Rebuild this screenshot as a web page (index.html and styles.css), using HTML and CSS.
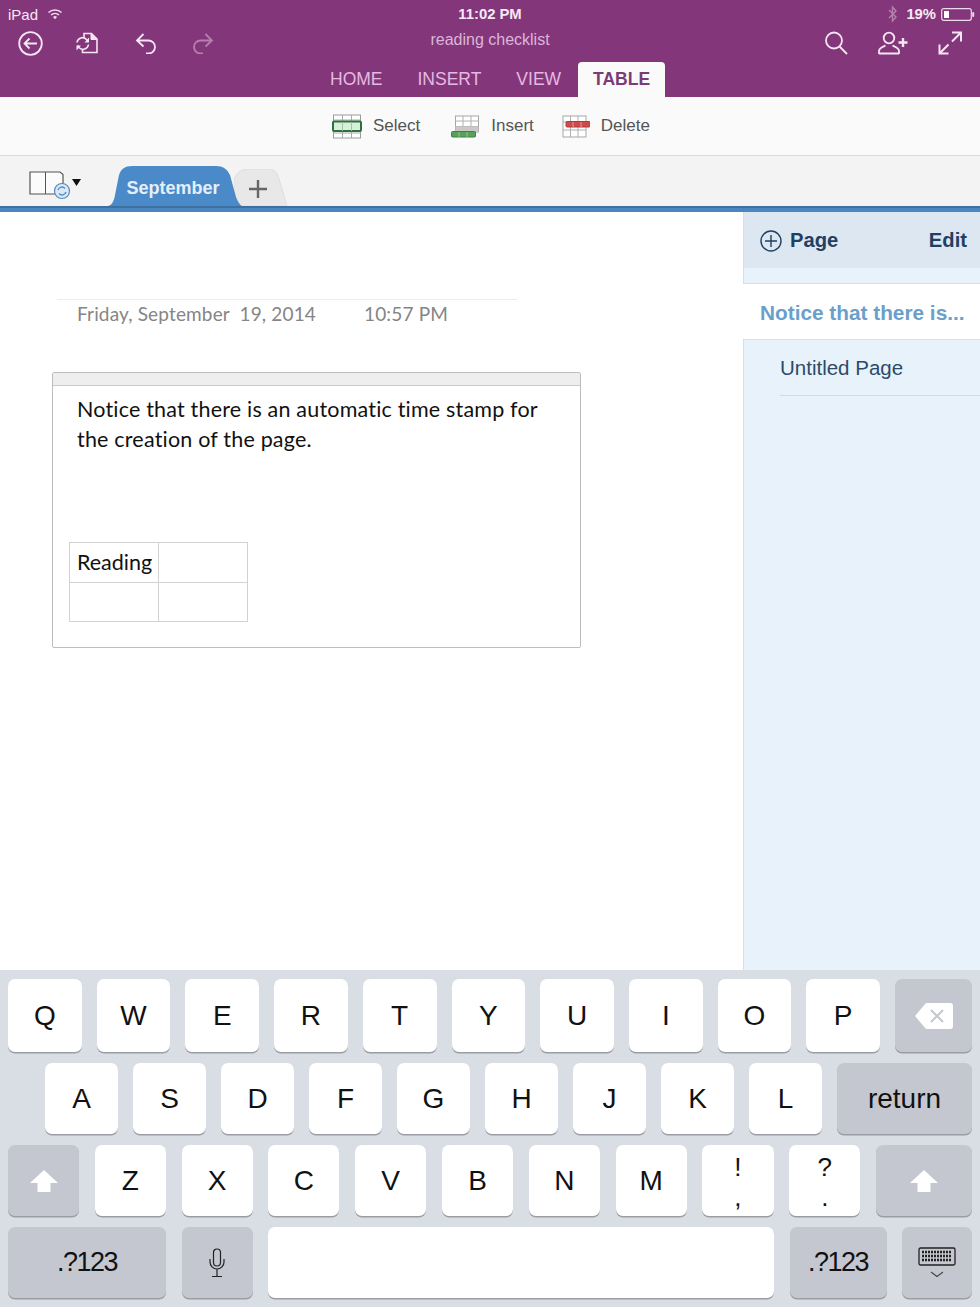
FILE: index.html
```html
<!DOCTYPE html>
<html lang="en">
<head>
<meta charset="utf-8">
<title>reading checklist</title>
<link rel="stylesheet" href="styles.css">
</head>
<body>
<div class="app">
  <header class="topbar">
    <div class="status">
      <div class="status-left">iPad
        <svg class="wifi" width="16" height="12" viewBox="0 0 16 12"><path d="M1.500 4.500a9.500 9.500 0 0 1 13 0M4 7a6 6 0 0 1 8 0" fill="none" stroke="#f0dcee" stroke-width="1.500"/><path d="M6 9a3 3 0 0 1 4 0l-2 2.200z" fill="#f0dcee"/></svg>
      </div>
      <div class="status-time">11:02 PM</div>
      <div class="status-right">
        <svg width="10" height="18" viewBox="0 0 10 18"><path d="M1 5l7 7-3.500 4V2L8 6l-7 7" fill="none" stroke="#b583ae" stroke-width="1.400"/></svg>
        <span class="pct">19%</span>
        <svg width="34" height="13" viewBox="0 0 34 13"><rect x="0.700" y="0.700" width="29.600" height="11.600" rx="2" fill="none" stroke="#eed9ec" stroke-width="1.200"/><rect x="3" y="3" width="5" height="7" fill="#fff"/><rect x="31.200" y="4" width="2" height="5" rx="1" fill="#eed9ec"/></svg>
      </div>
    </div>
    <div class="toolbar">
      <div class="tools tools-left">
        <svg width="25" height="25" viewBox="0 0 25 25"><circle cx="12.500" cy="12.500" r="11.300" fill="none" stroke="#f4e6f2" stroke-width="1.800"/><path d="M19 12.500H6.500M11.500 7.500l-5 5 5 5" fill="none" stroke="#f4e6f2" stroke-width="1.800"/></svg>
        <svg class="t-doc" width="22" height="22" viewBox="0 0 22 22"><path d="M8 5V1.500h7.500L21 7v13.500H6.500V17" fill="none" stroke="#f4e6f2" stroke-width="1.600"/><path d="M15 1.500V7.500h6" fill="#f4e6f2" stroke="#f4e6f2" stroke-width="1"/><path d="M1 10.500a5.500 5.500 0 0 1 9.500-3l1.500 2M12.500 12.500a5.500 5.500 0 0 1-9.500 3l-1.500-2" fill="none" stroke="#f4e6f2" stroke-width="1.600"/><path d="M13 5.500v5H8.500zM.5 18.500v-5H5z" fill="#f4e6f2"/></svg>
        <svg class="t-undo" width="22" height="22" viewBox="0 0 22 22"><path d="M8.500 2L2 8.500 8.500 14.500M2 8.500h11.500a6.500 6.500 0 0 1 0 13H11" fill="none" stroke="#f4e6f2" stroke-width="1.800"/></svg>
        <svg class="t-redo" width="22" height="22" viewBox="0 0 22 22"><path d="M13.500 2L20 8.500 13.500 14.500M20 8.500H8.500a6.500 6.500 0 0 0 0 13H11" fill="none" stroke="#b57fae" stroke-width="1.800"/></svg>
      </div>
      <div class="doc-title">reading checklist</div>
      <div class="tools tools-right">
        <svg width="24" height="24" viewBox="0 0 24 24"><circle cx="10" cy="9.500" r="8" fill="none" stroke="#f4e6f2" stroke-width="1.800"/><path d="M15.500 15.500L23 23" stroke="#f4e6f2" stroke-width="1.800"/></svg>
        <svg width="30" height="24" viewBox="0 0 30 24"><circle cx="11" cy="7" r="5.300" fill="none" stroke="#f4e6f2" stroke-width="1.800"/><path d="M1 23v-3c0-3 4-4.500 6.500-5.500M21 23v-3c0-3-4-4.500-6.500-5.500M1 22.500h20" fill="none" stroke="#f4e6f2" stroke-width="1.800"/><path d="M20.500 11.500h9M25 7v9" stroke="#f4e6f2" stroke-width="2.400"/></svg>
        <svg width="24" height="24" viewBox="0 0 24 24"><path d="M14 1.500h9v9M23 1.500L14 10.500M1.500 13.500v9h9M1.500 22.500l9-9" fill="none" stroke="#f4e6f2" stroke-width="2"/></svg>
      </div>
    </div>
    <nav class="menu">
      <span class="menu-item">HOME</span>
      <span class="menu-item">INSERT</span>
      <span class="menu-item">VIEW</span>
      <span class="menu-item menu-active">TABLE</span>
    </nav>
  </header>

  <section class="ribbon">
    <div class="rib-item rib-select">
      <svg width="30" height="25" viewBox="0 0 30 25"><rect x="1.500" y="1" width="27" height="23" fill="#fff" stroke="#9a9a9a"/><path d="M1.500 6H28.500M1.500 19H28.500M10.500 1v23M19.500 1v23" stroke="#aaa" fill="none"/><rect x="1" y="7.500" width="28" height="9.500" rx="1" fill="#d7f0d9" stroke="#2f7043" stroke-width="2"/><path d="M10.500 8v9M19.500 8v9" stroke="#9ac7a3"/></svg>
      <span>Select</span>
    </div>
    <div class="rib-item rib-insert">
      <svg width="28" height="23" viewBox="0 0 28 23"><rect x="4.500" y="1" width="23" height="16" fill="#fff" stroke="#a5a5a5"/><path d="M4.500 6H27.500M4.500 11.500H27.500M12 1v16M20 1v16" stroke="#b0b0b0" fill="none"/><rect x="4.500" y="11.500" width="23" height="6" fill="#c9c9c9"/><rect x="0.500" y="16.500" width="24" height="5.500" rx="1" fill="#5aa05a" stroke="#3f7f44"/><path d="M8 17v5M16 17v5" stroke="#8fc48f"/></svg>
      <span>Insert</span>
    </div>
    <div class="rib-item rib-delete">
      <svg width="28" height="23" viewBox="0 0 28 23"><rect x="1" y="1" width="23" height="21" fill="#fff" stroke="#a5a5a5"/><path d="M1 7H24M1 15H24M8.500 1v21M16 1v21" stroke="#b0b0b0" fill="none"/><rect x="4" y="6.500" width="24" height="5.500" rx="1" fill="#cf4a4a" stroke="#b23a3a"/><path d="M11 7v5M19 7v5" stroke="#e79a9a"/></svg>
      <span>Delete</span>
    </div>
  </section>

  <section class="tabstrip">
    <div class="nb-switch">
      <svg width="54" height="30" viewBox="0 0 54 30"><path d="M1 1h30l3 2.500V23H1z" fill="#fbfbfb" stroke="#555" stroke-width="1.200"/><path d="M16.500 1v22" stroke="#555"/><circle cx="33" cy="20" r="7.500" fill="#dbe9f6" stroke="#4f8ac4" stroke-width="1.200"/><path d="M29 19a4 4 0 0 1 7-1.500M37 21a4 4 0 0 1-7 1.500" fill="none" stroke="#4f8ac4" stroke-width="1.300"/><path d="M43 8h9L47.500 15z" fill="#111"/></svg>
    </div>
    <div class="sec-tab">
      <svg class="sec-bg" width="134" height="40" viewBox="0 0 134 40"><path d="M0 40C4 39 6 35 7 29L11 9C13 3 17 0 24 0H108C115 0 119 3 122 9L128 31C130 36 132 39 134 40Z" fill="#4b8ac8"/></svg>
      <span class="sec-label">September</span>
    </div>
    <div class="add-tab">
      <svg class="add-bg" width="54" height="37" viewBox="0 0 54 37"><path d="M0 37V11C2 3 8 0 14 0h20c6 0 9 3 11 10l6 20 2 7z" fill="#e8e8e8" stroke="#dedede"/></svg>
      <svg class="add-plus" width="20" height="20" viewBox="0 0 20 20"><path d="M10 1v18M1 10h18" stroke="#666" stroke-width="2.400"/></svg>
    </div>
  </section>
  <div class="blue-rule"></div>

  <main class="main">
    <article class="page">
      <div class="stamp">
        <span class="stamp-date">Friday, September&nbsp; 19, 2014</span>
        <span class="stamp-time">10:57 PM</span>
      </div>
      <div class="outline">
        <div class="outline-head"></div>
        <p class="note">Notice that there is an automatic time stamp for the creation of the page.</p>
        <table class="grid">
          <tr><td class="cell-text">Reading</td><td></td></tr>
          <tr><td></td><td></td></tr>
        </table>
      </div>
    </article>
    <aside class="pages">
      <div class="pages-head">
        <div class="pages-add">
          <svg width="22" height="22" viewBox="0 0 22 22"><circle cx="11" cy="11" r="10" fill="none" stroke="#1f3f63" stroke-width="1.400"/><path d="M11 5v12M5 11h12" stroke="#1f3f63" stroke-width="1.400"/></svg>
          <span>Page</span>
        </div>
        <span>Edit</span>
      </div>
      <div class="pages-strip"></div>
      <div class="page-selected">Notice that there is...</div>
      <div class="page-list">
        <div class="page-row">Untitled Page</div>
      </div>
    </aside>
  </main>

  <section class="keyboard">
    <div class="row row-1">
      <div class="key">Q</div><div class="key">W</div><div class="key">E</div><div class="key">R</div><div class="key">T</div><div class="key">Y</div><div class="key">U</div><div class="key">I</div><div class="key">O</div><div class="key">P</div>
      <div class="key fn k-back">
        <svg width="40" height="28" viewBox="0 0 40 28"><path d="M12 1h24a3 3 0 0 1 3 3v20a3 3 0 0 1-3 3H12L1 14z" fill="#fff"/><path d="M17 8l12 12M29 8L17 20" stroke="#c4c6ce" stroke-width="2"/></svg>
      </div>
    </div>
    <div class="row row-2">
      <div class="key">A</div><div class="key">S</div><div class="key">D</div><div class="key">F</div><div class="key">G</div><div class="key">H</div><div class="key">J</div><div class="key">K</div><div class="key">L</div>
      <div class="key fn k-return">return</div>
    </div>
    <div class="row row-3">
      <div class="key fn k-shift">
        <svg width="30" height="24" viewBox="0 0 30 24"><path d="M15 1L29 14H21.500V23H8.500V14H1z" fill="#fff"/></svg>
      </div>
      <div class="key">Z</div><div class="key">X</div><div class="key">C</div><div class="key">V</div><div class="key">B</div><div class="key">N</div><div class="key">M</div>
      <div class="key stack">!<br>,</div>
      <div class="key stack">?<br>.</div>
      <div class="key fn k-shift-r">
        <svg width="30" height="24" viewBox="0 0 30 24"><path d="M15 1L29 14H21.500V23H8.500V14H1z" fill="#fff"/></svg>
      </div>
    </div>
    <div class="row row-4">
      <div class="key fn k-num">.?123</div>
      <div class="key fn k-mic">
        <svg width="16" height="30" viewBox="0 0 16 30"><rect x="4.500" y="1" width="7" height="17" rx="3.500" fill="none" stroke="#222" stroke-width="1.200"/><path d="M1 11v3a7 7 0 0 0 14 0v-3M8 21v7M3 28.500h10" fill="none" stroke="#222" stroke-width="1.200"/></svg>
      </div>
      <div class="key k-space"></div>
      <div class="key fn k-num2">.?123</div>
      <div class="key fn k-hide">
        <svg width="38" height="32" viewBox="0 0 38 32"><rect x="1" y="1" width="36" height="17" rx="1.500" fill="none" stroke="#222" stroke-width="1.300"/><path d="M4 5h30M4 9h30M4 13h30" stroke="#222" stroke-width="2.400" stroke-dasharray="2 1"/><path d="M13 25l6 4.500 6-4.500" fill="none" stroke="#444" stroke-width="1.100"/></svg>
      </div>
    </div>
  </section>
</div>
</body>
</html>
```
FILE: styles.css
```css
* { box-sizing: border-box; }
html, body { margin: 0; padding: 0; background: #fff; }
body { font-family: "Liberation Sans", Arial, sans-serif; }
.app { width: 980px; height: 1307px; display: flex; flex-direction: column; overflow: hidden; }

/* top bar */
.topbar { height: 97px; background: #84367b; color: #fff; display: flex; flex-direction: column; flex: none; }
.status { height: 28px; display: grid; grid-template-columns: 1fr auto 1fr; align-items: center; padding: 0 5px; font-size: 15px; color: #f6e9f4; }
.status-left { display: flex; align-items: center; gap: 9px; margin-left: 3px; }
.status-time { font-weight: bold; font-size: 14.800px; }
.status-right { display: flex; align-items: center; justify-content: flex-end; }
.status-right svg:first-child { margin-right: 8px; }
.pct { font-weight: bold; font-size: 14.800px; margin-right: 5px; }
.toolbar { height: 30px; display: grid; grid-template-columns: 1fr auto 1fr; align-items: center; padding: 0 18px; }
.tools { display: flex; align-items: center; }
.tools-right { justify-content: flex-end; gap: 30px; }
.t-doc { margin-left: 33px; }
.t-undo { margin-left: 37px; }
.t-redo { margin-left: 35px; }
.doc-title { font-size: 16px; color: #dcb5d7; position: relative; top: -3px; }
.menu { height: 35px; margin-top: 4px; display: flex; align-items: stretch; padding-left: 330px; }
.menu-item { font-size: 17.500px; color: #e6b9e1; line-height: 35px; margin-right: 35px; }
.menu-active { margin-left: -18px; margin-right: 0; width: 87px; text-align: center; background: #fafafa; color: #7c3a76; font-weight: bold; font-size: 17.500px; border-radius: 4px 4px 0 0; }

/* ribbon */
.ribbon { height: 59px; background: #fafafa; border-bottom: 1px solid #d8d8d8; display: flex; align-items: center; padding-left: 332px; flex: none; font-size: 17px; color: #555; }
.rib-item { display: flex; align-items: center; gap: 11px; }
.rib-insert { margin-left: 31px; gap: 12px; }
.rib-delete { margin-left: 28px; gap: 11px; }

/* tab strip */
.tabstrip { height: 50px; background: #f3f3f3; display: flex; align-items: flex-end; flex: none; padding-left: 29px; }
.nb-switch { width: 79px; height: 35px; align-self: flex-start; margin-top: 15px; }
.sec-tab { width: 132px; height: 40px; position: relative; display: flex; align-items: center; justify-content: center; z-index: 1; }
.sec-bg { position: absolute; left: 0; top: 0; }
.sec-label { position: relative; color: #e3effa; font-size: 18px; font-weight: bold; left: -1px; top: 2px; }
.add-tab { width: 54px; height: 37px; position: relative; margin-left: -6px; display: flex; align-items: center; justify-content: center; }
.add-bg { position: absolute; left: 0; top: 0; }
.add-plus { position: relative; left: -3px; top: 1px; }
.blue-rule { height: 6px; background: #4b86c0; border-top: 2px solid #3d6f9f; flex: none; }

/* main */
.main { flex: 1; display: flex; min-height: 0; }
.page { flex: 1; padding: 87px 0 0 52px; font-family: Lato, "Open Sans", sans-serif; font-variant-ligatures: none; }
.stamp { width: 460px; margin-left: 5px; border-top: 1px solid #ececec; padding: 2px 0 0 20px; height: 73px; color: #858585; font-size: 19px; letter-spacing: 0.150px; line-height: 24px; white-space: nowrap; }
.stamp-time { margin-left: 43px; }
.outline { width: 529px; height: 276px; border: 1px solid #bdbdbd; border-radius: 2px; }
.outline-head { height: 13px; background: #eeeeee; border-bottom: 1px solid #c9c9c9; }
.note { margin: 9px 0 0 24px; width: 480px; font-size: 21.500px; letter-spacing: 0.190px; line-height: 29.500px; color: #111; }
.grid { border-collapse: collapse; margin: 88px 0 0 16px; table-layout: fixed; width: 179px; }
.grid td { border: 1.500px solid #d2d2d2; height: 39.500px; padding: 0; }
.grid .cell-text { font-size: 21.500px; color: #111; padding-left: 7px; white-space: nowrap; }

/* pages panel */
.pages { width: 237px; flex: none; border-left: 1px solid #d6dfe8; background: #e8f2fb; display: flex; flex-direction: column; }
.pages-head { height: 56px; padding: 1px 13px 0 16px; background: #dce7f2; display: flex; align-items: center; justify-content: space-between; font-size: 20.200px; font-weight: bold; color: #1f3f63; }
.pages-add { display: flex; align-items: center; gap: 8px; }
.pages-strip { height: 16px; border-bottom: 1px solid #d6dfe8; }
.page-selected { height: 56px; margin-left: -1px; padding: 2px 0 0 17px; background: #fff; border-bottom: 1px solid #d6dfe8; display: flex; align-items: center; font-size: 20.800px; font-weight: bold; color: #6b9fcb; white-space: nowrap; }
.page-row { margin-left: 36px; height: 56px; border-bottom: 1px solid #cfdbe6; display: flex; align-items: center; font-size: 20.500px; color: #2d4a68; }

/* keyboard */
.keyboard { height: 337px; flex: none; background: #d9dde4; padding: 9px 8px 0; display: flex; flex-direction: column; gap: 11px; }
.row { display: flex; height: 71px; }
.row-1 { height: 73px; gap: 15px; }
.row-2 { gap: 15px; padding-left: 37px; }
.row-3 { gap: 15.700px; }
.row-4 { gap: 15.500px; }
.key { flex: 1; min-width: 0; background: #fff; border-radius: 7px; box-shadow: 0 1.500px 0 #9b9da5; display: flex; align-items: center; justify-content: center; font-size: 28px; color: #111; }
.fn { background: #c4c7cf; }
.row-1 .k-back { flex: 0 0 77px; }
.row-2 .k-return { flex: 0 0 135px; }
.k-shift { flex: 0 0 71px; }
.k-shift-r { flex: 0 0 96px; }
.stack { display: block; text-align: center; font-size: 26px; line-height: 30px; padding-top: 7px; }
.k-num { flex: 0 0 158px; }
.k-num, .k-num2 { font-size: 27px; letter-spacing: -1.500px; }
.k-mic { flex: 0 0 71px; }
.k-space { flex: 0 0 506px; }
.k-num2 { flex: 0 0 97px; }
.k-hide { flex: 0 0 70px; }
```
